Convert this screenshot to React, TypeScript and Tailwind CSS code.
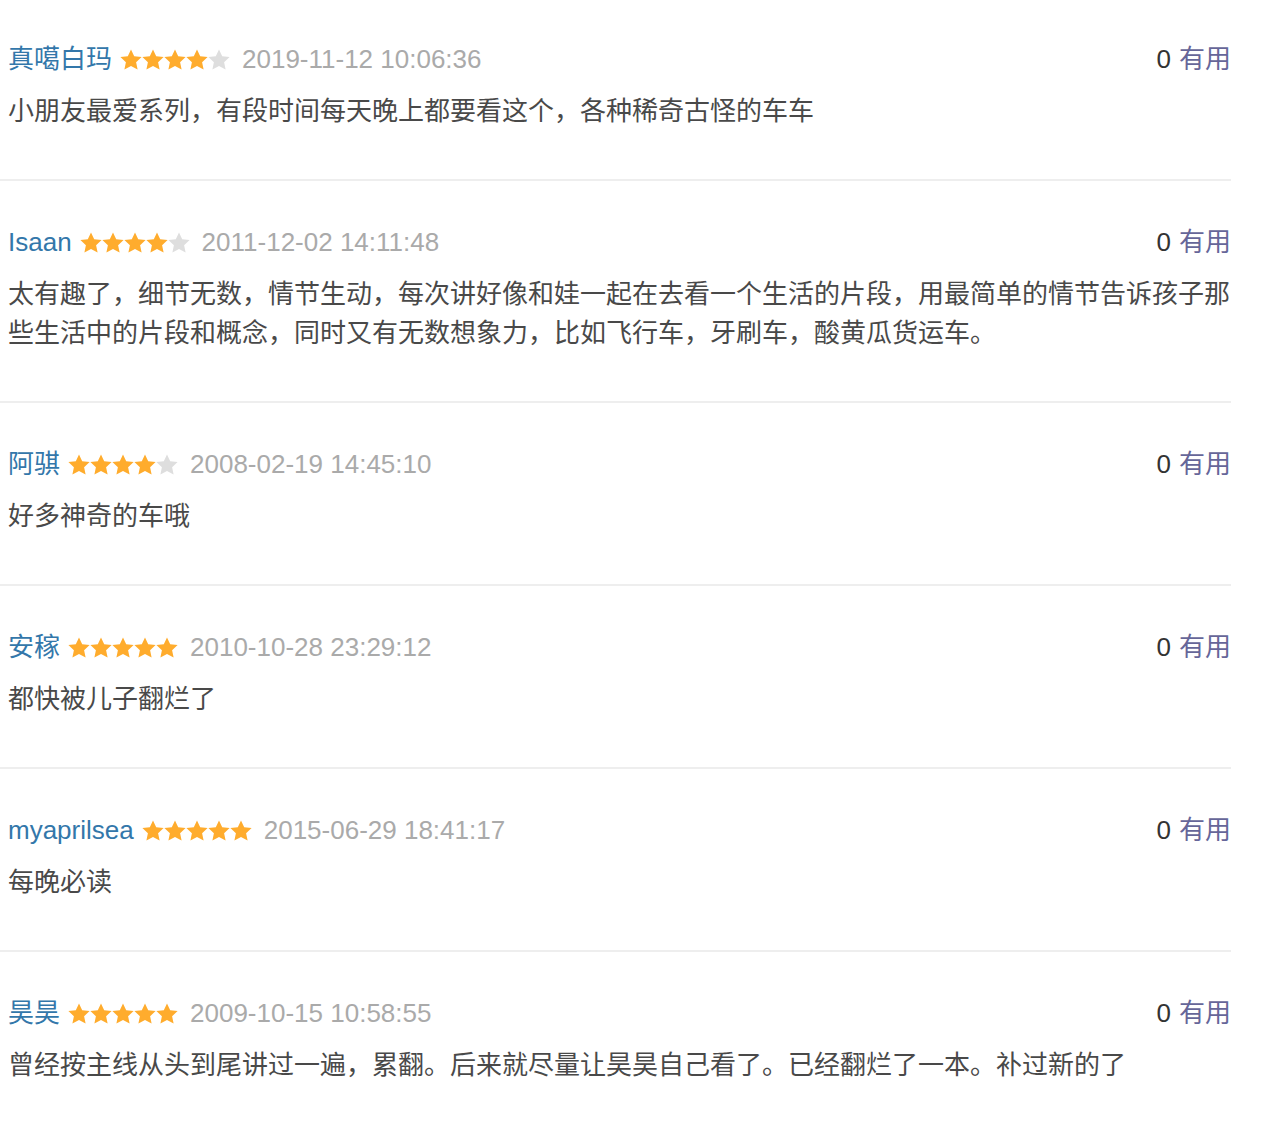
const reviews = [
  {
    name: "真噶白玛",
    rating: 4,
    time: "2019-11-12 10:06:36",
    text: "小朋友最爱系列，有段时间每天晚上都要看这个，各种稀奇古怪的车车",
  },
  {
    name: "Isaan",
    rating: 4,
    time: "2011-12-02 14:11:48",
    text: "太有趣了，细节无数，情节生动，每次讲好像和娃一起在去看一个生活的片段，用最简单的情节告诉孩子那些生活中的片段和概念，同时又有无数想象力，比如飞行车，牙刷车，酸黄瓜货运车。",
  },
  {
    name: "阿骐",
    rating: 4,
    time: "2008-02-19 14:45:10",
    text: "好多神奇的车哦",
  },
  {
    name: "安稼",
    rating: 5,
    time: "2010-10-28 23:29:12",
    text: "都快被儿子翻烂了",
  },
  {
    name: "myaprilsea",
    rating: 5,
    time: "2015-06-29 18:41:17",
    text: "每晚必读",
  },
  {
    name: "昊昊",
    rating: 5,
    time: "2009-10-15 10:58:55",
    text: "曾经按主线从头到尾讲过一遍，累翻。后来就尽量让昊昊自己看了。已经翻烂了一本。补过新的了",
  },
];

function Star({ on }: { on: boolean }) {
  return (
    <svg width="22" height="21" viewBox="0 0 22 21" className="block">
      <polygon
        points="11,0.4 14.2,7.2 21.6,8.1 16.1,13.3 17.6,20.6 11,17 4.4,20.6 5.9,13.3 0.4,8.1 7.8,7.2"
        fill={on ? "#ffac2d" : "#dedede"}
      />
    </svg>
  );
}

function Stars({ rating }: { rating: number }) {
  return (
    <span className="flex items-center">
      {[0, 1, 2, 3, 4].map((i) => (
        <Star key={i} on={i < rating} />
      ))}
    </span>
  );
}

export default function App() {
  return (
    <div
      className="w-[1231px] bg-white text-[26px] leading-[39px]"
      style={{ fontFamily: '"Liberation Sans", "Noto Sans CJK SC", sans-serif' }}
    >
      {reviews.map((r, idx) => (
        <div
          key={idx}
          className={`border-b-2 border-[#eeeeee] pb-[48px] pl-2 ${idx === 0 ? "pt-[40px]" : "pt-[42px]"}`}
        >
          <div className="flex items-center justify-between h-[39px]">
            <div className="flex items-center">
              <span className="text-[#3377aa]">{r.name}</span>
              <span className="ml-[8px]">
                <Stars rating={r.rating} />
              </span>
              <span className="ml-[12px] text-[#aaaaaa]">{r.time}</span>
            </div>
            <div className="flex items-center">
              <span className="text-[#333333]">0</span>
              <span className="ml-[8px] text-[#666699]">有用</span>
            </div>
          </div>
          <p className="mt-[13px] text-[#494949]">{r.text}</p>
        </div>
      ))}
    </div>
  );
}
